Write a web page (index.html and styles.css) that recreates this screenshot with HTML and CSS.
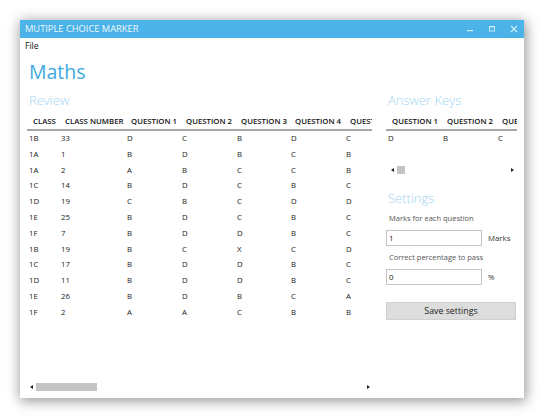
FILE: index.html
```html
<!DOCTYPE html>
<html>
<head>
<meta charset="utf-8">
<link rel="stylesheet" href="styles.css">
</head>
<body>
<div class="window">
  <div class="titlebar">
    <span class="title">MUTIPLE CHOICE MARKER</span>
    <div class="controls">
      <svg class="ctl" width="10" height="10" viewBox="0 0 10 10"><rect x="2" y="6" width="6" height="1.2" fill="#d6eefa"/></svg>
      <svg class="ctl" width="10" height="10" viewBox="0 0 10 10"><rect x="2.5" y="2.5" width="5" height="4.5" fill="none" stroke="#d6eefa" stroke-width="0.9"/><rect x="2" y="2" width="6" height="1.3" fill="#d6eefa"/></svg>
      <svg class="ctl" width="10" height="10" viewBox="0 0 10 10"><path d="M2 2 L8 8 M8 2 L2 8" stroke="#d6eefa" stroke-width="1.1"/></svg>
    </div>
  </div>
  <div class="menubar"><span class="menu-item">File</span></div>
  <div class="main">
    <h1 class="page-title">Maths</h1>
    <div class="panes">
      <div class="left">
        <h2 class="section">Review</h2>
        <div class="grid review-grid">
          <div class="row head">
            <div class="c c1">CLASS</div><div class="c c2">CLASS NUMBER</div><div class="c c3">QUESTION 1</div><div class="c c3">QUESTION 2</div><div class="c c3b">QUESTION 3</div><div class="c c3">QUESTION 4</div><div class="c c7">QUESTION 5</div>
          </div>
          <div class="row"><div class="c c1">1B</div><div class="c c2">33</div><div class="c c3">D</div><div class="c c3">C</div><div class="c c3b">B</div><div class="c c3">D</div><div class="c c7">C</div></div>
          <div class="row"><div class="c c1">1A</div><div class="c c2">1</div><div class="c c3">B</div><div class="c c3">D</div><div class="c c3b">B</div><div class="c c3">C</div><div class="c c7">B</div></div>
          <div class="row"><div class="c c1">1A</div><div class="c c2">2</div><div class="c c3">A</div><div class="c c3">B</div><div class="c c3b">C</div><div class="c c3">C</div><div class="c c7">B</div></div>
          <div class="row"><div class="c c1">1C</div><div class="c c2">14</div><div class="c c3">B</div><div class="c c3">D</div><div class="c c3b">C</div><div class="c c3">B</div><div class="c c7">C</div></div>
          <div class="row"><div class="c c1">1D</div><div class="c c2">19</div><div class="c c3">C</div><div class="c c3">B</div><div class="c c3b">C</div><div class="c c3">D</div><div class="c c7">D</div></div>
          <div class="row"><div class="c c1">1E</div><div class="c c2">25</div><div class="c c3">B</div><div class="c c3">D</div><div class="c c3b">C</div><div class="c c3">B</div><div class="c c7">C</div></div>
          <div class="row"><div class="c c1">1F</div><div class="c c2">7</div><div class="c c3">B</div><div class="c c3">D</div><div class="c c3b">D</div><div class="c c3">B</div><div class="c c7">C</div></div>
          <div class="row"><div class="c c1">1B</div><div class="c c2">19</div><div class="c c3">B</div><div class="c c3">C</div><div class="c c3b">X</div><div class="c c3">C</div><div class="c c7">D</div></div>
          <div class="row"><div class="c c1">1C</div><div class="c c2">17</div><div class="c c3">B</div><div class="c c3">D</div><div class="c c3b">D</div><div class="c c3">B</div><div class="c c7">C</div></div>
          <div class="row"><div class="c c1">1D</div><div class="c c2">11</div><div class="c c3">B</div><div class="c c3">D</div><div class="c c3b">D</div><div class="c c3">B</div><div class="c c7">C</div></div>
          <div class="row"><div class="c c1">1E</div><div class="c c2">26</div><div class="c c3">B</div><div class="c c3">D</div><div class="c c3b">B</div><div class="c c3">C</div><div class="c c7">A</div></div>
          <div class="row"><div class="c c1">1F</div><div class="c c2">2</div><div class="c c3">A</div><div class="c c3">A</div><div class="c c3b">C</div><div class="c c3">B</div><div class="c c7">B</div></div>
        </div>
        <div class="hscroll wide">
          <span class="arrow-l"></span>
          <div class="track"><div class="thumb long"></div></div>
          <span class="arrow-r"></span>
        </div>
      </div>
      <div class="right">
        <h2 class="section">Answer Keys</h2>
        <div class="grid key-grid">
          <div class="row head"><div class="c c3">QUESTION 1</div><div class="c c3">QUESTION 2</div><div class="c c7">QUESTION 3</div></div>
          <div class="row"><div class="c c3">D</div><div class="c c3">B</div><div class="c c7">C</div></div>
        </div>
        <div class="hscroll narrow">
          <span class="arrow-l"></span>
          <div class="track"><div class="thumb short"></div></div>
          <span class="arrow-r"></span>
        </div>
        <h2 class="section settings-title">Settings</h2>
        <div class="label">Marks for each question</div>
        <div class="field-row"><div class="input">1</div><span class="unit">Marks</span></div>
        <div class="label">Correct percentage to pass</div>
        <div class="field-row"><div class="input">0</div><span class="unit">%</span></div>
        <button class="btn">Save settings</button>
      </div>
    </div>
  </div>
</div>
</body>
</html>
```
FILE: styles.css
```css
* { box-sizing: border-box; }
html, body { margin: 0; background: #ffffff; }
body { padding: 20px; font-family: "Open Sans", "Noto Sans", sans-serif; color: #111; }

.window {
  width: 504px;
  height: 378px;
  background: #fff;
  display: flex;
  flex-direction: column;
  box-shadow: 1px 2px 12px 1px rgba(0,0,0,0.42);
}

.titlebar {
  height: 18px;
  background: #4bb3e7;
  display: flex;
  align-items: center;
  justify-content: space-between;
  padding-left: 5px;
  padding-right: 5px;
}
.title { color: #eef8fd; font-size: 9.3px; line-height: 18px; letter-spacing: 0; }
.controls { display: flex; gap: 12px; align-items: center; }
.ctl { display: block; }

.menubar { height: 16px; padding-left: 5px; display: flex; align-items: center; }
.menu-item { font-size: 8.6px; line-height: 16px; color: #111; }

.main { flex: 1; display: flex; flex-direction: column; padding: 0 7px 7px 7px; min-height: 0; }
.page-title {
  margin: 4px 0 0 2px;
  font-size: 19.5px;
  line-height: 28px;
  font-weight: 400;
  color: #3ea8e0;
}
.panes { flex: 1; display: flex; gap: 14px; min-height: 0; }
.left { width: 345px; display: flex; flex-direction: column; }
.right { width: 131px; display: flex; flex-direction: column; }

.section {
  margin: 4.5px 0 0 2px;
  font-size: 13px;
  line-height: 18px;
  font-weight: 300;
  color: #9fd4f1;
}

.grid { margin-top: 4.5px; overflow: hidden; }
.review-grid { flex: 1; }
.row { display: flex; height: 15.8px; white-space: nowrap; }
.row.head { height: 18px; border-bottom: 2px solid #a6a6a6; }
.c { flex: none; font-size: 7.8px; line-height: 14px; padding-left: 2px; overflow: hidden; color: #222; }
.head .c { font-weight: 600; padding-left: 6px; line-height: 16px; color: #111; }
.c1 { width: 32px; }
.c2 { width: 66px; }
.c3 { width: 55px; }
.c3b { width: 54px; }
.c7 { width: 60px; }
.review-grid .c7 { width: 28px; }
.key-grid .c7 { width: 21px; }

.hscroll { display: flex; align-items: center; height: 8px; }
.wide { padding-left: 3px; }
.narrow { margin-top: 19.2px; padding-left: 5px; }
.track { flex: 1; height: 8px; padding: 0 3px; }
.thumb { height: 8px; background: #c4c4c4; }
.thumb.long { width: 61px; }
.thumb.short { width: 8px; }
.arrow-l { width: 0; height: 0; border-top: 2.5px solid transparent; border-bottom: 2.5px solid transparent; border-right: 3px solid #222; }
.arrow-r { width: 0; height: 0; border-top: 2.5px solid transparent; border-bottom: 2.5px solid transparent; border-left: 3px solid #222; }
.wide .arrow-r { margin-right: 2px; }
.narrow .arrow-r { margin-right: 3px; }

.settings-title { margin-top: 15px; }
.label { margin: 5.4px 0 0 3px; font-size: 7.5px; line-height: 12px; color: #555; }
.field-row { margin-top: 5.6px; display: flex; align-items: center; gap: 6px; }
.input {
  width: 96px;
  height: 16px;
  border: 1px solid #c4c4c4;
  font-size: 7.8px;
  line-height: 14px;
  padding-left: 2px;
  color: #222;
}
.unit { font-size: 7.8px; color: #333; }
.btn {
  margin-top: 17px;
  width: 130px;
  height: 18px;
  background: #dddddd;
  border: 1px solid #d0d0d0;
  font-family: "Open Sans", "Noto Sans", sans-serif;
  font-size: 8.8px;
  color: #222;
  padding: 0;
}
```
